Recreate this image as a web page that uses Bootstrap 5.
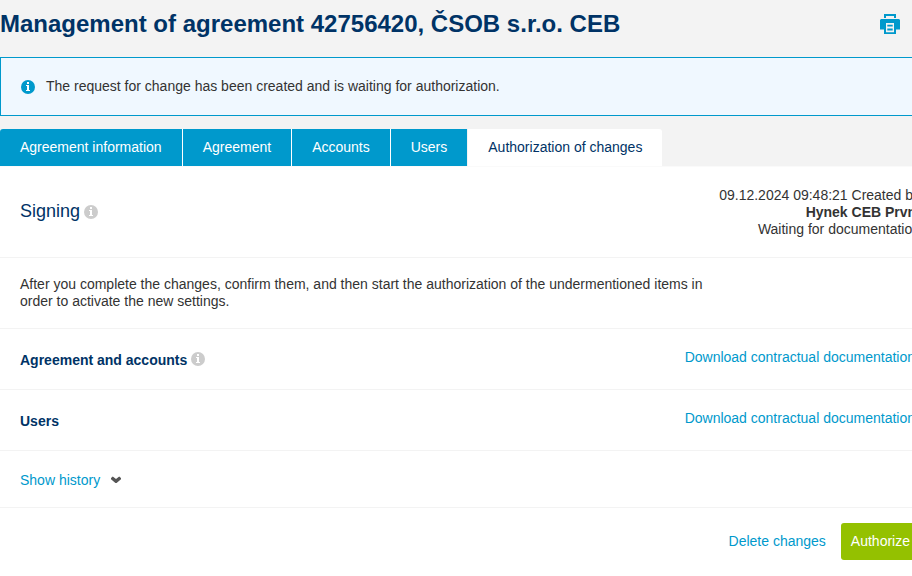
<!DOCTYPE html>
<html lang="en">
<head>
<meta charset="utf-8">
<meta name="viewport" content="width=device-width, initial-scale=1">
<title>Management of agreement</title>
<link href="https://cdn.jsdelivr.net/npm/bootstrap@5.3.0/dist/css/bootstrap.min.css" rel="stylesheet">
<style>
:root { --navy: #003366; --sky: #0099cc; --line: #f3f3f3; }
body { font: 14px/17px "Liberation Sans", Arial, sans-serif; color: #333; background: #fff; }
a { color: var(--sky); text-decoration: none; }
/* the sheet is a little wider than the window and runs past its right edge */
.sheet { margin-right: -28px; }
.masthead { background: #f3f3f3; border-bottom: 1px solid #fafafa; }
.title-bar { height: 57px; padding: 0 40px 10px 0; }
h1 { font-size: 24px; line-height: 28px; font-weight: 700; color: var(--navy); }
.print-btn { width: 20px; height: 20px; color: var(--sky); }
.notice { background: #f0f8ff; border: 1px solid var(--sky); border-radius: 0; padding: 20px; margin-bottom: 13px; color: #333; }
.notice svg { margin-right: 11px; }
.tabs { gap: 1px; }
.tabs .nav-link { background: var(--sky); color: #fff; padding: 10px 20px; border-radius: 0; }
.tabs .nav-item:first-child .nav-link { border-top-left-radius: 3px; }
.tabs .nav-item + .nav-item .nav-link:not(.active) { box-shadow: -1px 0 #fff; }
.tabs .nav-link.active { background: #fff; color: var(--navy); border-top-right-radius: 3px; }
.strip { border-bottom: 1px solid var(--line); padding: 0 20px; }
.strip-head { height: 91px; }
.strip-head h2 { padding-bottom: 2px; }
.strip-text { height: 71px; }
.strip-item { height: 61px; }
.strip-item h3 { padding-top: 2px; }
.strip-item a { padding: 0 5px 4px 0; }
.strip-more { height: 57px; padding-top: 2px; }
.strip-actions { padding: 15px 20px; gap: 15px; }
.strip-text p { max-width: 700px; }
h2 { font-size: 18px; line-height: 22px; font-weight: 400; color: var(--navy); }
h3 { font-size: 14px; line-height: 17px; font-weight: 700; color: var(--navy); }
.hint { color: #ccc; line-height: 14px; }
.btn-plain { font-size: 14px; line-height: 17px; color: var(--sky); }
.btn-go { font-size: 14px; line-height: 17px; padding: 10px; border: 0; border-radius: 3px; background: #94c100; color: #fff; }
</style>
</head>
<body>
<svg class="d-none" aria-hidden="true">
  <symbol id="info" viewBox="0 0 14 14">
    <circle cx="7" cy="7" r="7" fill="currentColor"/>
    <path d="M6 2h2v2H6zM5 5h3v5h1v1H5v-1h1V6H5z" fill="#fff"/>
  </symbol>
</svg>
<div class="overflow-hidden">
<div class="sheet">
  <header class="masthead">
    <div class="title-bar d-flex align-items-center justify-content-between">
      <h1 class="mb-0">Management of agreement 42756420, ČSOB s.r.o. CEB</h1>
      <button type="button" class="print-btn btn p-0 border-0 d-flex" aria-label="Print">
        <svg width="20" height="20" viewBox="0 0 20 20" fill="currentColor" aria-hidden="true">
          <path d="M4 0h12v4h-2V2H6v2H4z"/>
          <path fill-rule="evenodd" d="M1 5h18l1 1v9.500h-4V20H4v-4.500H0V6zM6 9v9.300h8V9z"/>
          <path d="M7.300 10.800h5.400v1.800H7.300zM7.300 14.600h5.400v1.800H7.300z"/>
        </svg>
      </button>
    </div>
    <div class="alert notice d-flex align-items-center" role="alert">
      <svg width="14" height="14" color="#0099cc" aria-hidden="true"><use href="#info"/></svg>
      <span>The request for change has been created and is waiting for authorization.</span>
    </div>
    <ul class="nav tabs">
      <li class="nav-item"><a class="nav-link" href="#">Agreement information</a></li>
      <li class="nav-item"><a class="nav-link" href="#">Agreement</a></li>
      <li class="nav-item"><a class="nav-link" href="#">Accounts</a></li>
      <li class="nav-item"><a class="nav-link" href="#">Users</a></li>
      <li class="nav-item"><a class="nav-link active" aria-current="page" href="#">Authorization of changes</a></li>
    </ul>
  </header>
  <main>
    <section class="strip strip-head d-flex align-items-center justify-content-between">
      <div class="d-flex align-items-center gap-1">
        <h2 class="mb-0">Signing</h2>
        <button type="button" class="hint btn p-0 border-0" aria-label="About signing"><svg class="d-block" width="14" height="14"><use href="#info"/></svg></button>
      </div>
      <div class="text-end">09.12.2024 09:48:21 Created by<br><strong>Hynek CEB První</strong><br>Waiting for documentation</div>
    </section>
    <section class="strip strip-text d-flex align-items-center">
      <p class="mb-0">After you complete the changes, confirm them, and then start the authorization of the undermentioned items in order to activate the new settings.</p>
    </section>
    <section class="strip strip-item d-flex align-items-center justify-content-between">
      <div class="d-flex align-items-center gap-1">
        <h3 class="mb-0">Agreement and accounts</h3>
        <button type="button" class="hint btn p-0 border-0" aria-label="About agreement and accounts"><svg class="d-block" width="14" height="14"><use href="#info"/></svg></button>
      </div>
      <a href="#">Download contractual documentation</a>
    </section>
    <section class="strip strip-item d-flex align-items-center justify-content-between">
      <h3 class="mb-0">Users</h3>
      <a href="#">Download contractual documentation</a>
    </section>
    <section class="strip strip-more d-flex align-items-center">
      <button type="button" class="btn btn-plain p-0 border-0 d-flex align-items-center">Show history
        <svg class="ms-2" width="16" height="10" viewBox="0 0 16 10" fill="#555" aria-hidden="true"><path d="M3 3 4.800 1.500 8 4l3.200-2.500L13 3v1.300L8.600 8H7.400L3 4.300z"/></svg>
      </button>
    </section>
    <div class="strip-actions d-flex align-items-center justify-content-end">
      <a href="#">Delete changes</a>
      <button type="button" class="btn btn-go">Authorize</button>
    </div>
  </main>
</div>
</div>
<script src="https://cdn.jsdelivr.net/npm/bootstrap@5.3.0/dist/js/bootstrap.bundle.min.js"></script>
</body>
</html>
